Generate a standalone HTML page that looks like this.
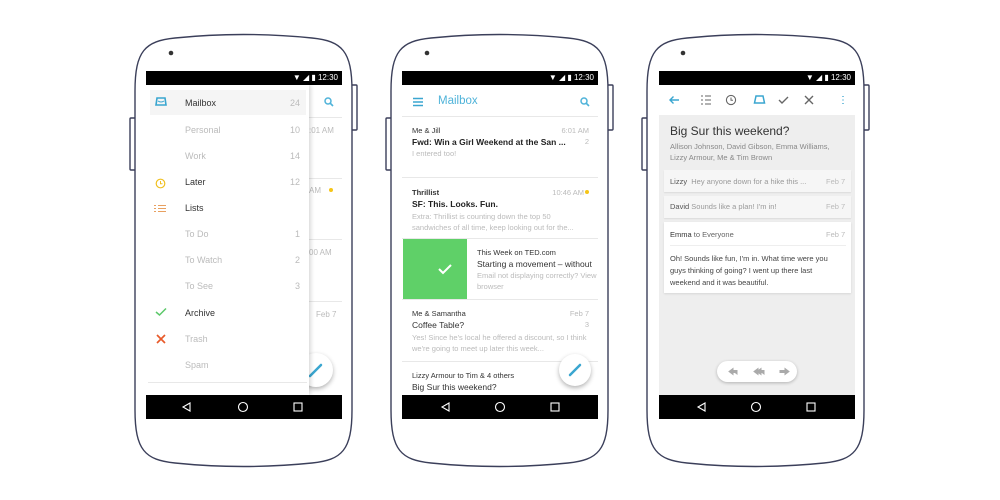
<!DOCTYPE html>
<html><head><meta charset="utf-8"><style>
*{margin:0;padding:0;box-sizing:border-box}
body{width:1000px;height:500px;background:#fff;position:relative;overflow:hidden;font-family:"Liberation Sans",Arial,sans-serif}
.a{position:absolute;white-space:nowrap}
.scr{position:absolute;top:71px;width:196px;height:348px;background:#fff;overflow:hidden}
.sb{position:absolute;left:0;top:0;width:100%;height:14px;background:#000;color:#fff;font-size:8px}
.nav{position:absolute;left:0;bottom:0;width:100%;height:24px;background:#000}
.g{color:#bbb}
.d{color:#333}
.hr{position:absolute;left:0;width:100%;height:1px;background:#e8e8e8}
</style></head><body>
<svg class="a" style="left:0;top:0" width="1000" height="500">
<g fill="#fff" stroke="#3b3f5a" stroke-width="1.4">
<g transform="translate(135,33)">
<rect x="-5" y="85" width="6" height="52" rx="1"/><rect x="216" y="52" width="6" height="45" rx="1"/>
<path d="M0,58 C0,18 10,8 40,5 Q108,-2 177,5 C207,8 217,18 217,58 L217,377 C217,417 207,427 177,430 Q108,437 40,430 C10,427 0,417 0,377 Z"/></g>
<g transform="translate(391,33)">
<rect x="-5" y="85" width="6" height="52" rx="1"/><rect x="216" y="52" width="6" height="45" rx="1"/>
<path d="M0,58 C0,18 10,8 40,5 Q108,-2 177,5 C207,8 217,18 217,58 L217,377 C217,417 207,427 177,430 Q108,437 40,430 C10,427 0,417 0,377 Z"/></g>
<g transform="translate(647,33)">
<rect x="-5" y="85" width="6" height="52" rx="1"/><rect x="216" y="52" width="6" height="45" rx="1"/>
<path d="M0,58 C0,18 10,8 40,5 Q108,-2 177,5 C207,8 217,18 217,58 L217,377 C217,417 207,427 177,430 Q108,437 40,430 C10,427 0,417 0,377 Z"/></g>
</g>
<g fill="#333"><circle cx="171" cy="53" r="2.3"/><circle cx="427" cy="53" r="2.3"/><circle cx="683" cy="53" r="2.3"/></g>
</svg>

<!-- PHONE 1 -->
<div class="scr" style="left:146px">
 <div class="sb"><span class="a" style="right:4px;top:2px">▼ ◢ ▮ 12:30</span></div>
 <!-- background list -->
 <div class="a" style="left:0;top:14px;width:196px;height:310px;background:#fff">
  <svg class="a" style="left:178px;top:12px" width="10" height="10"><circle cx="4" cy="4" r="3" fill="none" stroke="#4fb3d9" stroke-width="1.5"/><path d="M6,6 L9,9" stroke="#4fb3d9" stroke-width="1.6"/></svg>
  <div class="hr" style="top:32px"></div>
  <span class="a g" style="left:163px;top:41px;font-size:8px">:01 AM</span>
  <div class="hr" style="top:93px"></div>
  <span class="a g" style="left:163px;top:101px;font-size:8px">AM</span><span class="a" style="left:183px;top:103px;width:4px;height:4px;border-radius:50%;background:#f5c518"></span>
  <div class="hr" style="top:154px"></div>
  <span class="a g" style="left:163px;top:163px;font-size:8px">00 AM</span>
  <div class="hr" style="top:216px"></div>
  <span class="a g" style="left:170px;top:225px;font-size:8px">Feb 7</span>
 </div>
 <div class="a" style="left:153px;top:282px;width:34px;height:34px;border-radius:50%;background:#fff;box-shadow:0 2px 5px rgba(0,0,0,.3)"><svg width="34" height="34"><path d="M11,23 L22,12" stroke="#3aa6d0" stroke-width="2.5" stroke-linecap="round"/></svg></div>
 <!-- drawer -->
 <div class="a" style="left:0;top:14px;width:163px;height:310px;background:#fff;box-shadow:2px 0 4px rgba(0,0,0,.15);font-size:9px">
  <div class="a" style="left:4px;top:5px;width:156px;height:25px;background:#f5f5f5"></div>
  <svg class="a" style="left:9px;top:12px" width="12" height="10"><path d="M2,1 L10,1 L11,8 L1,8 Z" fill="none" stroke="#3aa6d0" stroke-width="1.6"/><path d="M3,4 Q6,6 9,4" stroke="#3aa6d0" fill="none"/></svg>
  <span class="a d" style="left:39px;top:13px">Mailbox</span><span class="a g" style="left:144px;top:13px">24</span>
  <span class="a g" style="left:39px;top:40px">Personal</span><span class="a g" style="left:144px;top:40px">10</span>
  <span class="a g" style="left:39px;top:66px">Work</span><span class="a g" style="left:144px;top:66px">14</span>
  <svg class="a" style="left:9px;top:93px" width="11" height="11"><circle cx="5.5" cy="5.5" r="4.3" fill="none" stroke="#f0c020" stroke-width="1.2"/><path d="M5.5,3 V5.8 H7.5" fill="none" stroke="#f0c020"/></svg>
  <span class="a d" style="left:39px;top:92px">Later</span><span class="a g" style="left:144px;top:92px">12</span>
  <svg class="a" style="left:8px;top:119px" width="13" height="9"><path d="M0,1.5H2M4,1.5H12M0,4.5H2M4,4.5H12M0,7.5H2M4,7.5H12" stroke="#e8a060" stroke-width="1"/></svg>
  <span class="a d" style="left:39px;top:118px">Lists</span>
  <span class="a g" style="left:39px;top:144px">To Do</span><span class="a g" style="left:149px;top:144px">1</span>
  <span class="a g" style="left:39px;top:170px">To Watch</span><span class="a g" style="left:149px;top:170px">2</span>
  <span class="a g" style="left:39px;top:196px">To See</span><span class="a g" style="left:149px;top:196px">3</span>
  <svg class="a" style="left:9px;top:222px" width="12" height="10"><path d="M1,5 L4.5,8 L11,1.5" fill="none" stroke="#5cc86a" stroke-width="1.5"/></svg>
  <span class="a d" style="left:39px;top:223px">Archive</span>
  <svg class="a" style="left:10px;top:249px" width="10" height="10"><path d="M1,1 L9,9 M9,1 L1,9" stroke="#e85a2a" stroke-width="1.7"/></svg>
  <span class="a g" style="left:39px;top:249px">Trash</span>
  <span class="a g" style="left:39px;top:275px">Spam</span>
  <div class="hr" style="top:297px;left:2px;width:159px"></div>
 </div>
 <div class="nav"><svg width="196" height="24"><g fill="none" stroke="#fff" stroke-width="1.1"><path d="M44,8 L37,12 L44,16 Z"/><circle cx="97" cy="12" r="4.5"/><rect x="148" y="8" width="8" height="8"/></g></svg></div>
</div>

<!-- PHONE 2 -->
<div class="scr" style="left:402px">
 <div class="sb"><span class="a" style="right:4px;top:2px">▼ ◢ ▮ 12:30</span></div>
 <svg class="a" style="left:10px;top:26px" width="12" height="10"><path d="M1,1.5H11M1,5H11M1,8.5H11" stroke="#3aa6d0" stroke-width="1.5"/></svg>
 <span class="a" style="left:36px;top:24px;font-size:11.5px;color:#4fb3d9">Mailbox</span>
 <svg class="a" style="left:178px;top:26px" width="10" height="10"><circle cx="4" cy="4" r="3" fill="none" stroke="#4fb3d9" stroke-width="1.5"/><path d="M6,6 L9,9" stroke="#4fb3d9" stroke-width="1.6"/></svg>
 <div class="hr" style="top:45px"></div>
 <span class="a d" style="left:10px;top:55px;font-size:7.5px">Me &amp; Jill</span><span class="a g" style="right:9px;top:55px;font-size:7.5px">6:01 AM</span>
 <span class="a" style="left:10px;top:66px;font-size:8.5px;font-weight:bold;color:#222">Fwd: Win a Girl Weekend at the San ...</span><span class="a g" style="right:9px;top:66px;font-size:7.5px">2</span>
 <span class="a g" style="left:10px;top:78px;font-size:7.5px">I entered too!</span>
 <div class="hr" style="top:106px"></div>
 <span class="a d" style="left:10px;top:117px;font-size:7.5px;font-weight:bold">Thrillist</span><span class="a g" style="right:14px;top:117px;font-size:7.5px">10:46 AM</span><span class="a" style="right:9px;top:119px;width:4px;height:4px;border-radius:50%;background:#f5c518"></span>
 <span class="a" style="left:10px;top:128px;font-size:8.5px;font-weight:bold;color:#222">SF: This. Looks. Fun.</span>
 <span class="a g" style="left:10px;top:140px;font-size:7.5px;line-height:11px">Extra: Thrillist is counting down the top 50<br>sandwiches of all time, keep looking out for the...</span>
 <div class="hr" style="top:167px"></div>
 <div class="a" style="left:1px;top:168px;width:64px;height:60px;background:#5fd068"><svg width="64" height="60"><path d="M36,30 L40,34 L48,26" fill="none" stroke="#fff" stroke-width="2"/></svg></div>
 <span class="a d" style="left:75px;top:177px;font-size:7.5px">This Week on TED.com</span>
 <span class="a" style="left:75px;top:188px;font-size:8.5px;color:#333">Starting a movement – without</span>
 <span class="a g" style="left:75px;top:199px;font-size:7.5px;line-height:11px">Email not displaying correctly? View<br>browser</span>
 <div class="hr" style="top:228px"></div>
 <span class="a d" style="left:10px;top:238px;font-size:7.5px">Me &amp; Samantha</span><span class="a g" style="right:9px;top:238px;font-size:7.5px">Feb 7</span>
 <span class="a" style="left:10px;top:249px;font-size:8.5px;color:#333">Coffee Table?</span><span class="a g" style="right:9px;top:249px;font-size:7.5px">3</span>
 <span class="a g" style="left:10px;top:261px;font-size:7.5px;line-height:11px">Yes! Since he's local he offered a discount, so I think<br>we're going to meet up later this week...</span>
 <div class="hr" style="top:290px"></div>
 <span class="a d" style="left:10px;top:300px;font-size:7.5px">Lizzy Armour to Tim &amp; 4 others</span>
 <span class="a" style="left:10px;top:311px;font-size:8.5px;color:#333">Big Sur this weekend?</span>
 <div class="a" style="left:157px;top:283px;width:32px;height:32px;border-radius:50%;background:#fff;box-shadow:0 2px 5px rgba(0,0,0,.3)"><svg width="32" height="32"><path d="M11,21 L21,11" stroke="#3aa6d0" stroke-width="2.5" stroke-linecap="round"/></svg></div>
 <div class="nav"><svg width="196" height="24"><g fill="none" stroke="#fff" stroke-width="1.1"><path d="M47,8 L40,12 L47,16 Z"/><circle cx="98" cy="12" r="4.5"/><rect x="149" y="8" width="8" height="8"/></g></svg></div>
</div>

<!-- PHONE 3 -->
<div class="scr" style="left:659px;background:#eeeeee">
 <div class="sb"><span class="a" style="right:4px;top:2px">▼ ◢ ▮ 12:30</span></div>
 <div class="a" style="left:0;top:14px;width:196px;height:30px;background:#fff"></div>
 <svg class="a" style="left:0;top:14px" width="196" height="30"><g fill="none" stroke-width="1.4">
  <path d="M20,15 H11 M14.5,11.5 L11,15 L14.5,18.5" stroke="#3aa6d0"/>
  <path d="M42,11H44M46,11H52M42,15H44M46,15H52M42,19H44M46,19H52" stroke="#666" stroke-width="1.1"/>
  <circle cx="72" cy="15" r="4.6" stroke="#666" stroke-width="1.1"/><path d="M72,12.5V15.3H74" stroke="#666" stroke-width="1"/>
  <path d="M97,11 L104,11 L105.5,18 L95.5,18 Z" stroke="#3aa6d0" stroke-width="1.5"/>
  <path d="M120,15 L123,18 L129,12" stroke="#666"/>
  <path d="M146,11 L154,19 M154,11 L146,19" stroke="#666"/>
  <path d="M184,11V11.8M184,14.6V15.4M184,18.2V19" stroke="#3aa6d0" stroke-width="1.8"/></g></svg>
 <span class="a" style="left:11px;top:53px;font-size:12px;color:#333">Big Sur this weekend?</span>
 <span class="a" style="left:11px;top:70px;font-size:7.5px;line-height:11px;color:#888">Allison Johnson, David Gibson, Emma Williams,<br>Lizzy Armour, Me &amp; Tim Brown</span>
 <div class="a" style="left:5px;top:99px;width:187px;height:22px;background:#f6f6f6;box-shadow:0 1px 1px rgba(0,0,0,.08)"></div>
 <span class="a" style="left:11px;top:106px;font-size:7.5px;color:#999"><span style="color:#555">Lizzy</span>&nbsp; Hey anyone down for a hike this ...</span><span class="a g" style="left:167px;top:106px;font-size:7.5px">Feb 7</span>
 <div class="a" style="left:5px;top:125px;width:187px;height:22px;background:#f6f6f6;box-shadow:0 1px 1px rgba(0,0,0,.08)"></div>
 <span class="a" style="left:11px;top:131px;font-size:7.5px;color:#999"><span style="color:#555">David</span>&nbsp;Sounds like a plan! I'm in!</span><span class="a g" style="left:167px;top:131px;font-size:7.5px">Feb 7</span>
 <div class="a" style="left:5px;top:151px;width:187px;height:71px;background:#fff;box-shadow:0 1px 2px rgba(0,0,0,.1)"></div>
 <span class="a" style="left:11px;top:159px;font-size:7.5px;color:#666"><span style="color:#333">Emma</span> to Everyone</span><span class="a g" style="left:167px;top:159px;font-size:7.5px">Feb 7</span>
 <div class="a" style="left:11px;top:174px;width:176px;height:1px;background:#eee"></div>
 <span class="a" style="left:11px;top:182px;font-size:7.5px;line-height:12px;color:#444">Oh! Sounds like fun, I'm in. What time were you<br>guys thinking of going? I went up there last<br>weekend and it was beautiful.</span>
 <div class="a" style="left:58px;top:290px;width:80px;height:21px;border-radius:11px;background:#fff;box-shadow:0 1px 3px rgba(0,0,0,.25)"><svg width="80" height="21"><g fill="#aaa" stroke="#aaa" stroke-width="1"><path d="M12,10.5 L16,7.5 V9.5 H20 V13 L18,11.5 H16 V13.5 Z"/><path d="M37,10.5 L41,7.5 V13.5 Z M40,10.5 L44,7.5 V9.5 H47 V13 L45,11.5 H44 V13.5Z"/><path d="M72,10.5 L68,7.5 V9.5 H63 V11.5 H68 V13.5 Z"/></g></svg></div>
 <div class="nav"><svg width="196" height="24"><g fill="none" stroke="#fff" stroke-width="1.1"><path d="M46,8 L39,12 L46,16 Z"/><circle cx="97" cy="12" r="4.5"/><rect x="148" y="8" width="8" height="8"/></g></svg></div>
</div>
</body></html>
